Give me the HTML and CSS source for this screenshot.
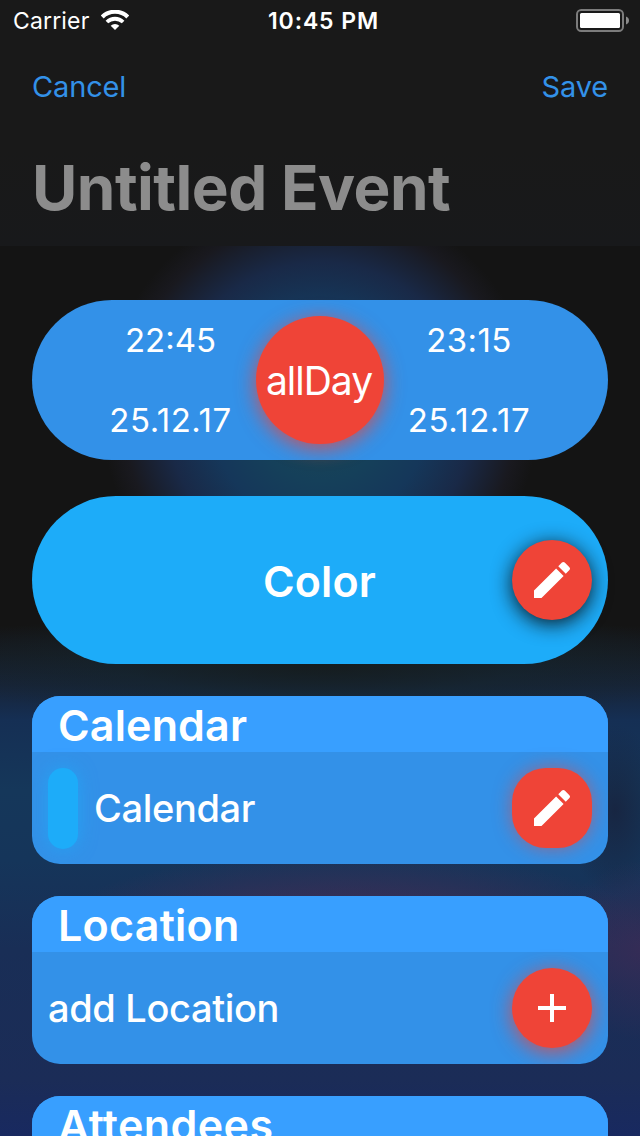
FILE: index.html
```html
<!DOCTYPE html>
<html lang="en">
<head>
<meta charset="utf-8">
<title>Untitled Event</title>
<link rel="stylesheet" href="styles.css">
</head>
<body>
<div class="screen">
  <header class="header">
    <div class="status">
      <div class="carrier"><span class="carrier-name">Carrier</span>
        <svg class="wifi" width="28" height="20" viewBox="0 0 28 20" fill="none"><path d="M1.2 7a18.2 18.2 0 0 1 25.6 0" stroke="#fff" stroke-width="4.2"/><path d="M5.9 12a11.7 11.7 0 0 1 16.2 0" stroke="#fff" stroke-width="3.8"/><path d="M14 20l-4.3-4.3a6.1 6.1 0 0 1 8.6 0z" fill="#fff"/></svg>
      </div>
      <span class="time">10:45 PM</span>
      <svg class="battery" width="54" height="24" viewBox="0 0 54 24"><rect x="1" y="1" width="46" height="21" rx="4.2" fill="none" stroke="#7c7c7c" stroke-width="2"/><rect x="4" y="4" width="40" height="15" rx="1.5" fill="#fff"/><path d="M50 7.5c4 1.2 4 6.8 0 8z" fill="#8b8b8b"/></svg>
    </div>
    <nav class="nav"><a class="cancel">Cancel</a><a class="save">Save</a></nav>
    <h1 class="title"><span class="title-text">Untitled Event</span></h1>
  </header>
  <main class="content">
    <section class="dates">
      <div class="moment"><span class="hour">22:45</span><span class="day">25.12.17</span></div>
      <button class="all-day"><span class="all-day-text">allDay</span></button>
      <div class="moment end"><span class="hour end-hour">23:15</span><span class="day">25.12.17</span></div>
    </section>
    <section class="color"><span class="color-text">Color</span>
      <button class="round dark-shadow"><svg width="48" height="48" viewBox="0 0 24 24" fill="#fff"><path d="M3 17.25V21h3.75L17.81 9.94l-3.75-3.75L3 17.25zM20.71 7.04a1 1 0 0 0 0-1.41l-2.34-2.34a1 1 0 0 0-1.41 0l-1.83 1.83 3.75 3.75 1.83-1.83z"/></svg></button>
    </section>
    <section class="card">
      <h2 class="card-head"><span class="head-calendar">Calendar</span></h2>
      <div class="card-row"><i class="swatch"></i><span class="row-text row-calendar">Calendar</span>
        <button class="round squarish"><svg width="48" height="48" viewBox="0 0 24 24" fill="#fff"><path d="M3 17.25V21h3.75L17.81 9.94l-3.75-3.75L3 17.25zM20.71 7.04a1 1 0 0 0 0-1.41l-2.34-2.34a1 1 0 0 0-1.41 0l-1.83 1.83 3.75 3.75 1.83-1.83z"/></svg></button>
      </div>
    </section>
    <section class="card">
      <h2 class="card-head"><span class="head-location">Location</span></h2>
      <div class="card-row"><span class="row-text row-location">add Location</span>
        <button class="round"><svg width="48" height="48" viewBox="0 0 24 24" fill="#fff"><path d="M19 13h-6v6h-2v-6H5v-2h6V5h2v6h6v2z"/></svg></button>
      </div>
    </section>
    <section class="card">
      <h2 class="card-head"><span class="head-attendees">Attendees</span></h2>
      <div class="card-row"></div>
    </section>
  </main>
</div>
</body>
</html>
```
FILE: styles.css
```css
* { box-sizing: border-box; }
body { margin: 0; font-family: Inter, "Liberation Sans", sans-serif; color: #fff; overflow: hidden; }
button { border: 0; padding: 0; font: inherit; color: inherit; }
h1, h2 { margin: 0; }
span, a { white-space: nowrap; }

.screen {
  height: 1136px;
  overflow: hidden;
  background:
    radial-gradient(ellipse 90px 90px at 645px 950px, rgba(67,43,86,.65), transparent),
    radial-gradient(ellipse 310px 90px at 350px 940px, rgba(78,45,86,.9), rgba(64,46,86,.7) 45%, transparent),
    radial-gradient(ellipse 50px 85px at 615px 810px, rgba(24,32,58,.75), transparent),
    radial-gradient(circle 218px at 320px 415px, #1c4653 0, #15405a 30%, #15375a 50%, #192947 70%, #19191f 90%, transparent),
    radial-gradient(ellipse 400px 60px at 320px 665px, rgba(21,28,29,.9) 0, rgba(21,37,43,.5) 50%, transparent),
    linear-gradient(#141414 0, #141414 625px, #161c24 655px, #172438 685px, #152f54 720px, #15375a 790px, #15355a 860px, #192e56 950px, #1b2c57 1080px, #182960 1136px);
}

.header { height: 246px; background: linear-gradient(#191919 0, #191919 150px, #18191b 246px); }
.status { height: 42px; padding: 0 10px 0 13px; display: grid; grid-template-columns: 1fr auto 1fr; align-items: center; }
.carrier { display: flex; align-items: center; gap: 12px; }
.carrier-name { font-size: 23px; letter-spacing: .15px; }
.wifi { display: block; margin-top: -2px; }
.time { font-size: 23px; font-weight: 600; letter-spacing: .9px; padding-left: 4px; }
.battery { justify-self: end; }
.nav { height: 88px; padding: 0 32px; display: flex; justify-content: space-between; align-items: center; color: #3391e8; font-size: 29px; letter-spacing: -.15px; }
.title { height: 116px; padding: 0 32px; line-height: 116px; font-size: 62px; font-weight: 700; letter-spacing: -.55px; color: #8c8c8c; }

.content { padding: 54px 32px 0; display: flex; flex-direction: column; }
.dates { height: 160px; border-radius: 80px; background: #3391e8; display: flex; align-items: center; justify-content: space-between; padding: 0 53px; }
.moment { width: 171px; height: 160px; display: grid; grid-template-rows: 80px 80px; align-items: center; justify-items: center; font-size: 33px; }
.day { letter-spacing: .5px; }
.end { padding-right: 1px; }
.end-hour { letter-spacing: .4px; }
.all-day { width: 128px; height: 128px; flex: none; border-radius: 50%; background: #ef4437; box-shadow: 0 4px 20px rgba(239,68,55,.8); font-size: 39px; display: flex; align-items: center; justify-content: center; }
.all-day-text { letter-spacing: -1px; padding-right: 2px; }
.color { height: 168px; margin-top: 36px; border-radius: 84px; background: #1dacf9; padding: 0 16px; display: grid; grid-template-columns: 80px 1fr 80px; align-items: center; justify-items: center; font-size: 43px; font-weight: 600; }
.color-text { grid-column: 2; padding: 2px 1px 0 0; letter-spacing: .15px; }
.round { width: 80px; height: 80px; flex: none; border-radius: 40px; background: #ef4437; box-shadow: 0 4px 20px rgba(239,68,55,.8); display: flex; align-items: center; justify-content: center; }
.dark-shadow { box-shadow: 0 4px 20px rgba(10,10,10,.9); }
.squarish { border-radius: 34px; box-shadow: 0 0 18px rgba(239,68,55,.55); }
.card { height: 168px; flex: none; margin-top: 32px; border-radius: 28px; overflow: hidden; background: #3391e8; }
.card-head { height: 56px; padding-left: 26px; line-height: 58px; background: #389fff; font-size: 43px; font-weight: 600; letter-spacing: .15px; }
.head-location { letter-spacing: .25px; }
.head-attendees { letter-spacing: .4px; }
.card-row { height: 112px; padding: 0 16px; display: flex; align-items: center; gap: 16px; }
.swatch { width: 30px; height: 81px; border-radius: 15px; background: #1dacf9; box-shadow: 0 0 18px rgba(29,172,249,.65); }
.row-text { flex: 1; font-size: 38px; font-weight: 500; letter-spacing: -.35px; }
```
